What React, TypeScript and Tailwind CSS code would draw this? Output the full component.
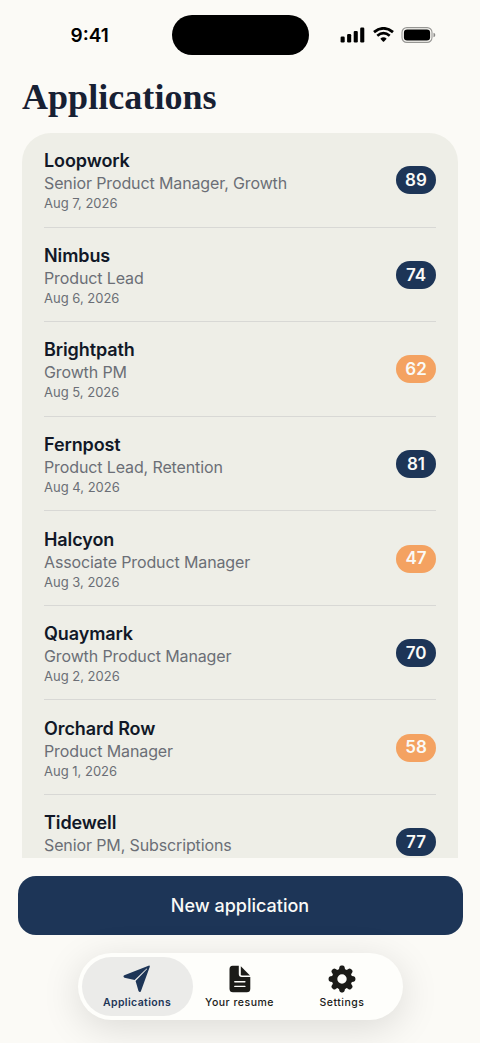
type Application = {
  company: string;
  role: string;
  date?: string;
  score: number;
};

const applications: Application[] = [
  { company: 'Loopwork', role: 'Senior Product Manager, Growth', date: 'Aug 7, 2026', score: 89 },
  { company: 'Nimbus', role: 'Product Lead', date: 'Aug 6, 2026', score: 74 },
  { company: 'Brightpath', role: 'Growth PM', date: 'Aug 5, 2026', score: 62 },
  { company: 'Fernpost', role: 'Product Lead, Retention', date: 'Aug 4, 2026', score: 81 },
  { company: 'Halcyon', role: 'Associate Product Manager', date: 'Aug 3, 2026', score: 47 },
  { company: 'Quaymark', role: 'Growth Product Manager', date: 'Aug 2, 2026', score: 70 },
  { company: 'Orchard Row', role: 'Product Manager', date: 'Aug 1, 2026', score: 58 },
  { company: 'Tidewell', role: 'Senior PM, Subscriptions', score: 77 },
];

function StatusBar() {
  return (
    <div className="flex h-[70px] shrink-0 items-start pt-[15px] text-black">
      <div className="w-[171.5px] pl-[70.5px] pt-[6px] text-[19px] leading-[30px] font-semibold">
        9:41
      </div>
      <div className="h-10 w-[137px] rounded-full bg-black" />
      <div className="flex items-center gap-[7px] pl-[31.5px] pt-[12px]">
        <svg width="26" height="16" viewBox="0 0 26 16" fill="currentColor">
          <rect x="0.6" y="9.6" width="4.1" height="5.8" rx="1.2" />
          <rect x="7.1" y="7" width="4.1" height="8.4" rx="1.2" />
          <rect x="13.7" y="3.9" width="4.1" height="11.5" rx="1.2" />
          <rect x="20.2" y="0.6" width="4.1" height="14.8" rx="1.2" />
        </svg>
        <svg width="21" height="16" viewBox="0 0 21 16" fill="none" stroke="currentColor">
          <path d="M1 5.2Q10.5 -2.5 20 5.2" strokeWidth="2.8" />
          <path d="M4.3 8.8Q10.5 3.6 16.7 8.8" strokeWidth="2.7" />
          <path d="M7.3 11.7Q10.5 9 13.7 11.7L11.1 14.5Q10.5 15 9.9 14.5Z" fill="currentColor" stroke="none" />
        </svg>
        <svg width="35" height="16" viewBox="0 0 35 16">
          <rect x="1" y="0.6" width="30" height="14.8" rx="4.8" fill="none" stroke="#000" strokeOpacity="0.4" strokeWidth="1.1" />
          <rect x="2.9" y="2.5" width="26.2" height="11" rx="3.2" fill="#000" />
          <path d="M32.5 5.7Q34.3 6.2 34.3 8T32.5 10.3Z" fill="#000" fillOpacity="0.45" />
        </svg>
      </div>
    </div>
  );
}

function Row({ item }: { item: Application }) {
  return (
    <li className="flex h-[94.57px] shrink-0 items-center justify-between border-b border-[#d8d8d5]">
      <div className="flex flex-col pt-[2px]">
        <span className="text-[18px] leading-[23px] font-semibold tracking-[-0.1px] text-[#111827]">{item.company}</span>
        <span className="text-[16px] leading-[22px] tracking-[-0.12px] text-[#6b6e76]">{item.role}</span>
        <span className="h-[18px] text-[13px] leading-[18px] text-[#6b6e76]">{item.date}</span>
      </div>
      <span
        className={`mt-px flex h-[28px] w-10 items-center justify-center rounded-full pt-px text-[17px] font-semibold text-[#fafaf7] ${
          item.score >= 70 ? 'bg-[#1d3557]' : 'bg-[#f4a261]'
        }`}
      >
        {item.score}
      </span>
    </li>
  );
}

function PlaneIcon() {
  return (
    <svg width="28" height="28" viewBox="0 0 28 28" fill="currentColor">
      <path d="M25.5.7Q27.2.1 26.7 1.9L18 25.9Q16.8 28.2 15.5 26L12.6 15.9L24.1 4.1L23.6 3.6L11.6 14.9L1.5 12.7Q-.5 11.6 1.3 10.3Z" />
    </svg>
  );
}

function DocumentIcon() {
  return (
    <svg width="22" height="28" viewBox="0 0 22 28">
      <path d="M3.5.7H9.8V9Q9.8 11.9 12.7 11.9H21.3V23.8Q21.3 27.3 17.8 27.3H4Q.5 27.3.5 23.8V4.2Q.5.7 3.5.7Z" fill="currentColor" />
      <path d="M11.8 1.3L21 10.4H13Q11.8 10.4 11.8 9.2Z" fill="currentColor" />
      <path d="M5.8 16.8H15.9M5.8 21.4H15.9" stroke="#fefefb" strokeWidth="1.4" strokeLinecap="round" />
    </svg>
  );
}

function GearIcon() {
  const angles = [0, 45, 90, 135, 180, 225, 270, 315];
  return (
    <svg width="28" height="28" viewBox="0 0 28 28" fill="currentColor">
      <circle cx="14" cy="14" r="7.5" fill="none" stroke="currentColor" strokeWidth="5.6" />
      {angles.map((angle) => (
        <path key={angle} d="M10.7 6L11.3 2.4Q11.6.6 13.2.6H14.8Q16.4.6 16.7 2.4L17.3 6Z" transform={`rotate(${angle} 14 14)`} />
      ))}
    </svg>
  );
}

export default function App() {
  return (
    <div className="flex h-[1043px] w-[480px] flex-col overflow-hidden bg-[#fbfaf6] font-['Inter',sans-serif]">
      <StatusBar />
      <h1 className="h-[63px] shrink-0 pl-[22px] pt-[6px] font-['Liberation_Serif',serif] text-[36px] leading-[42px] font-bold tracking-[0.05px] text-[#172033]">
        Applications
      </h1>
      <ul className="mx-[22px] flex h-[725px] shrink-0 flex-col overflow-hidden rounded-t-[29px] bg-[#eeeee7] px-[22px]">
        {applications.map((item) => (
          <Row key={item.company} item={item} />
        ))}
      </ul>
      <button className="mx-[17.5px] mt-[18px] h-[59px] shrink-0 rounded-[18px] bg-[#1d3557] text-[18px] font-medium text-[#fafaf7]">
        New application
      </button>
      <nav className="mt-[17.5px] ml-[77.5px] flex h-[67.5px] w-[325px] shrink-0 rounded-full bg-[#fefefb] p-[4px] text-[10.5px] leading-[14px] font-medium tracking-[0.5px] text-[#1b1b18] shadow-[0_8px_38px_rgba(0,0,0,0.13)]">
        <div className="flex w-[111px] flex-col items-center rounded-full bg-[#ebebe9] pt-[8px] font-semibold tracking-[0.38px] text-[#1d3557]">
          <PlaneIcon />
          <span className="mt-[3px]">Applications</span>
        </div>
        <div className="flex w-[94px] flex-col items-center pt-[8px]">
          <DocumentIcon />
          <span className="mt-[3px]">Your resume</span>
        </div>
        <div className="flex w-[111px] flex-col items-center pt-[8px]">
          <GearIcon />
          <span className="mt-[3px]">Settings</span>
        </div>
      </nav>
    </div>
  );
}
